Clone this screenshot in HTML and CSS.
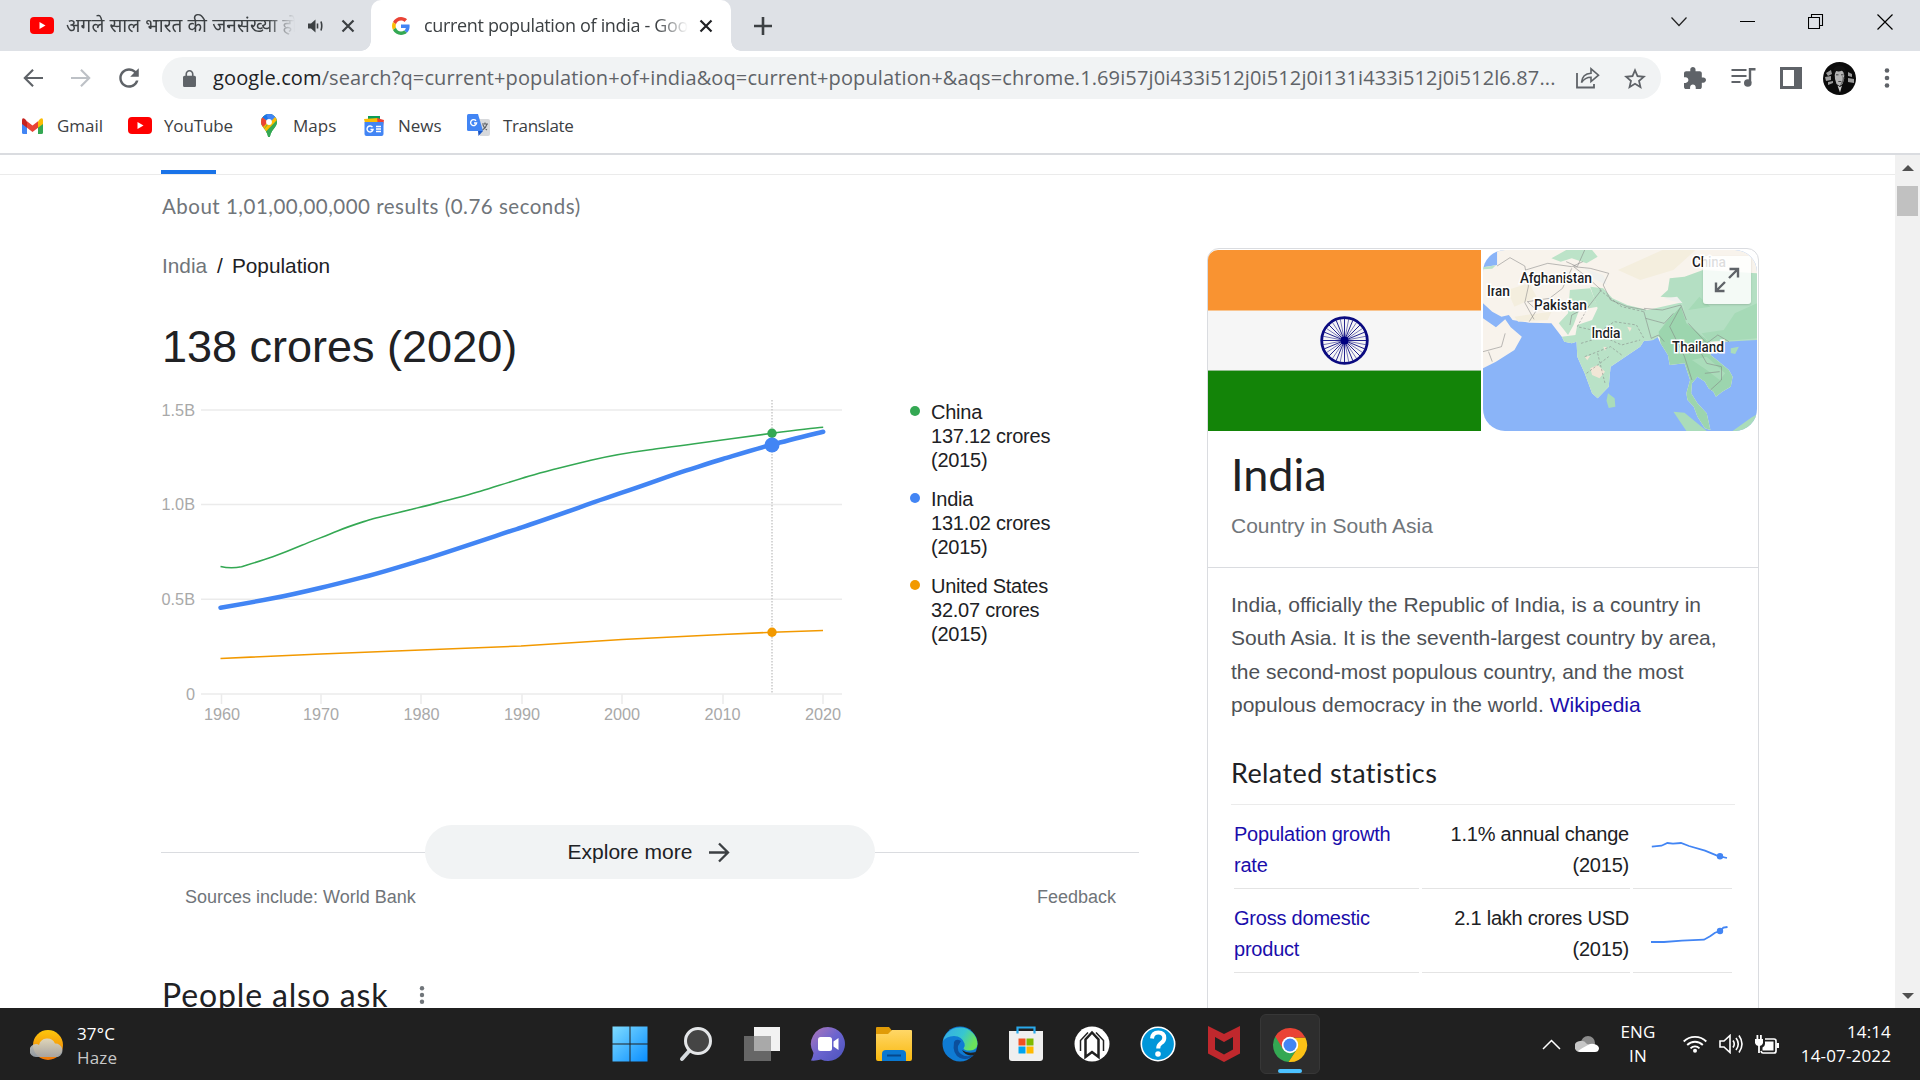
FILE: index.html
```html
<!DOCTYPE html>
<html lang="en">
<head>
<meta charset="utf-8">
<title>current population of india - Google Search</title>
<link rel="stylesheet" href="styles.css">
</head>
<body>
<header class="tabs">
  <div class="tab tab-idle">
    <svg class="yt" viewBox="0 0 24 17"><rect width="24" height="17" rx="4" fill="#f00"/><path d="M9.500 5v7l6-3.500z" fill="#fff"/></svg>
    <span class="tab-title tab-title-hi">अगले साल भारत की जनसंख्या हो</span>
    <svg class="speaker" viewBox="0 0 15 14"><path d="M0 4.500h3L7.500.5v13L3 9.500H0z" fill="#3c4043"/><path d="M9.500 4.500v5M13 2.500q1.500 4.500 0 9" fill="none" stroke="#3c4043" stroke-width="1.600"/></svg>
    <svg class="tab-x" viewBox="0 0 14 14"><path d="M1.500 1.500l11 11M12.500 1.500l-11 11" stroke="#3c4043" stroke-width="2.200"/></svg>
  </div>
  <div class="tab tab-active">
    <svg class="favicon" viewBox="0 0 48 48"><path fill="#EA4335" d="M24 9.500c3.540 0 6.710 1.220 9.210 3.600l6.850-6.850C35.900 2.380 30.470 0 24 0 14.620 0 6.510 5.380 2.560 13.220l7.980 6.190C12.430 13.720 17.740 9.500 24 9.500z"/><path fill="#4285F4" d="M46.980 24.550c0-1.570-.15-3.090-.38-4.550H24v9.020h12.940c-.58 2.960-2.260 5.480-4.780 7.180l7.730 6c4.510-4.180 7.090-10.360 7.090-17.650z"/><path fill="#FBBC05" d="M10.530 28.590c-.48-1.450-.76-2.990-.76-4.590s.27-3.140.76-4.590l-7.980-6.190C.92 16.460 0 20.120 0 24s.92 7.540 2.560 10.780l7.970-6.190z"/><path fill="#34A853" d="M24 48c6.480 0 11.930-2.130 15.890-5.810l-7.730-6c-2.150 1.450-4.920 2.300-8.160 2.300-6.260 0-11.570-4.220-13.470-9.910l-7.980 6.190C6.510 42.620 14.620 48 24 48z"/></svg>
    <span class="tab-title tab-title-en">current population of india - Goo</span>
    <svg class="tab-x" viewBox="0 0 14 14"><path d="M1.500 1.500l11 11M12.500 1.500l-11 11" stroke="#202124" stroke-width="2.200"/></svg>
  </div>
  <svg class="new-tab" viewBox="0 0 18 18"><path d="M9 0v18M0 9h18" stroke="#3c4043" stroke-width="2.600"/></svg>
  <div class="window-controls">
    <svg width="16" height="10" viewBox="0 0 16 10"><path d="M.5.5L8 8.500 15.500.5" fill="none" stroke="#222" stroke-width="1.200"/></svg>
    <svg width="15" height="15" viewBox="0 0 15 15"><path d="M0 7.500h15" stroke="#000"/></svg>
    <svg width="16" height="16" viewBox="0 0 16 16"><path d="M.5 3.500h11v11H.5zM3.500 3.500v-3h11v11h-3" fill="none" stroke="#000" stroke-width="1.100"/></svg>
    <svg width="16" height="16" viewBox="0 0 16 16"><path d="M.5.5l15 15M15.500.5l-15 15" stroke="#000" stroke-width="1.200"/></svg>
  </div>
</header>

<nav class="toolbar">
  <svg class="nav-icon" viewBox="0 0 24 24"><path fill="#5f6368" d="M22 11H6.300l6.500-6.500L11.300 3l-9 9 9 9 1.500-1.500L6.300 13H22z"/></svg>
  <svg class="nav-icon" viewBox="0 0 24 24"><path fill="#bdc1c6" d="M2 11h15.700l-6.500-6.500L12.700 3l9 9-9 9-1.500-1.500 6.500-6.500H2z"/></svg>
  <svg class="nav-icon reload" viewBox="3 3 18 18"><path fill="#5f6368" d="M17.650 6.350C16.200 4.900 14.210 4 12 4c-4.420 0-7.990 3.580-7.990 8s3.570 8 7.990 8c3.730 0 6.840-2.550 7.730-6h-2.080c-.82 2.330-3.040 4-5.650 4-3.310 0-6-2.690-6-6s2.690-6 6-6c1.660 0 3.140.69 4.220 1.780L13 11h7V4l-2.350 2.350z"/></svg>
  <div class="omnibox">
    <svg class="lock" viewBox="4 1 16 21"><path fill="#5f6368" d="M18 8h-1V6c0-2.760-2.240-5-5-5S7 3.240 7 6v2H6c-1.100 0-2 .9-2 2v10c0 1.100.9 2 2 2h12c1.100 0 2-.9 2-2V10c0-1.100-.9-2-2-2zm-3 0H9V6c0-1.660 1.340-3 3-3s3 1.340 3 3v2z"/></svg>
    <span class="url"><b>google.com</b>/search?q=current+population+of+india&amp;oq=current+population+&amp;aqs=chrome.1.69i57j0i433i512j0i512j0i131i433i512j0i512l6.87...</span>
    <svg class="share" viewBox="0 0 24 22"><path d="M1 6v14.500h17V17" fill="none" stroke="#5f6368" stroke-width="1.800"/><path d="M5.500 15.500c.5-6 4-9 9.500-9.300V1.800l7.500 6.400-7.500 6.300v-4.300c-4.500 0-7 1.500-9.500 5.300z" fill="none" stroke="#5f6368" stroke-width="1.600"/></svg>
    <svg class="star" viewBox="2 2 20 19"><path fill="#5f6368" d="M22 9.240l-7.190-.62L12 2 9.190 8.630 2 9.240l5.460 4.730L5.820 21 12 17.270 18.180 21l-1.630-7.030L22 9.240zM12 15.400l-3.760 2.270 1-4.280-3.320-2.880 4.380-.38L12 6.100l1.710 4.040 4.380.38-3.320 2.880 1 4.280L12 15.400z"/></svg>
  </div>
  <svg class="ext" viewBox="2 1 21 21"><path fill="#5f6368" d="M20.500 11H19V7c0-1.100-.9-2-2-2h-4V3.500C13 2.120 11.880 1 10.500 1S8 2.120 8 3.500V5H4c-1.100 0-1.990.9-1.990 2v3.800H3.500c1.490 0 2.700 1.210 2.700 2.700s-1.210 2.700-2.700 2.700H2V20c0 1.100.9 2 2 2h3.800v-1.500c0-1.490 1.210-2.700 2.700-2.700 1.490 0 2.700 1.210 2.700 2.700V22H17c1.100 0 2-.9 2-2v-4h1.500c1.380 0 2.500-1.120 2.500-2.500S21.880 11 20.500 11z"/></svg>
  <svg class="media" viewBox="0 0 24 20"><path d="M0 2h15M0 8h15M0 14h9" stroke="#5f6368" stroke-width="2.200"/><path d="M18.500 15V1.200H24" fill="none" stroke="#5f6368" stroke-width="2.400"/><circle cx="16.300" cy="15" r="3.800" fill="#5f6368"/></svg>
  <svg class="panel" viewBox="0 0 22 22"><path fill="#5f6368" fill-rule="evenodd" d="M0 0h22v22H0zM3 3v16h11V3z"/></svg>
  <svg class="avatar" viewBox="0 0 33 33"><clipPath id="av"><circle cx="16.500" cy="16.500" r="16.500"/></clipPath><g clip-path="url(#av)"><path d="M0 0h33v33H0z" fill="#0b0b0b"/><path d="M3 11l5-3 1 4-4 2zM2 15l6-1v4l-5 1zM25 10l4 2v3l-4-1zM25 16l6 1v4l-6-1zM5 20l5-1v2l-5 2z" fill="#9a9a9a"/><path d="M11.500 10q5-4 10 0l-.5 7-1.500 5-3 2-3-2-1.500-5z" fill="#b5b5b5"/><path d="M10 12q-1-8 7-8.500 6 0 6 8.500l-2 1q0-3-2-4.500-3 1.500-6 .5l-1.500 4z" fill="#111"/><path d="M13 12.800h2.500M18 12.800h2.500M15.300 19.500h3" stroke="#444" stroke-width="1"/><path d="M19 14q2 3-2 9l3-2 1.500-5z" fill="#666"/><path d="M14.500 23.500l2.500 7 2-7-2 1.500z" fill="#ccc"/></g></svg>
  <svg class="menu" viewBox="0 0 6 20"><g fill="#5f6368"><circle cx="3" cy="2.500" r="2.300"/><circle cx="3" cy="10" r="2.300"/><circle cx="3" cy="17.500" r="2.300"/></g></svg>
</nav>

<nav class="bookmarks">
  <a class="bm bm-gmail"><svg width="21" height="16" viewBox="0 0 21 16"><path d="M0 2v12.500Q0 16 1.500 16H5V6z" fill="#4285f4"/><path d="M21 2v12.500q0 1.500-1.500 1.500H16V6z" fill="#34a853"/><path d="M0 2.300V6l5 3.800V3.500L3 1Q0-1 0 2.300z" fill="#c5221f"/><path d="M5 3.300l5.500 4.200L16 3.300v6.500L10.500 14 5 9.800z" fill="#ea4335"/><path d="M21 2.300V6l-5 3.800V3.500L18 1q3-2 3 1.300z" fill="#fbbc04"/></svg><span>Gmail</span></a>
  <a class="bm bm-yt"><svg width="24" height="17" viewBox="0 0 24 17"><rect width="24" height="17" rx="4" fill="#f00"/><path d="M9.500 5v7l6-3.500z" fill="#fff"/></svg><span>YouTube</span></a>
  <a class="bm bm-maps"><svg width="16" height="23" viewBox="0 0 16 23"><clipPath id="pin"><path d="M8 0a8 8 0 0 1 8 8c0 5-6 8-7 14.500q-1 1-2 0C6 16 0 13 0 8a8 8 0 0 1 8-8z"/></clipPath><g clip-path="url(#pin)"><path d="M0 0h16v23H0z" fill="#34a853"/><path d="M0 12L14 0 0-2z" fill="#1a73e8"/><path d="M0 3l8 5-6 8-3-2z" fill="#fbbc04"/><path d="M0 2l7 6-5 5-4-6z" fill="#ea4335"/><path d="M5 0h12v5L9 9z" fill="#4285f4"/><path d="M3 15L14 3l3 3L6 19z" fill="#fbbc04"/><path d="M4.500 18L17 5v18H5z" fill="#34a853"/></g><circle cx="8" cy="8" r="2.900" fill="#fff"/></svg><span>Maps</span></a>
  <a class="bm bm-news"><svg width="22" height="20" viewBox="0 0 22 20"><path d="M5 0h12v6H5z" fill="#0c9d58"/><path d="M1 3l14-1 2 5H2z" fill="#fbbc04"/><path d="M14 2l7 2-1 6h-5z" fill="#ea4335"/><path d="M1.500 6h19v12q0 2-2 2h-15q-2 0-2-2z" fill="#4285f4"/><path d="M9.500 11.200a3 3 0 1 0 .5 2.300H7.500M13 10.500h5M13 13h5M13 15.500h5" fill="none" stroke="#fff" stroke-width="1.400"/></svg><span>News</span></a>
  <a class="bm bm-tr"><svg width="23" height="23" viewBox="0 0 23 23"><path d="M9 5h12q2 0 2 2v13q0 2-2 2h-8z" fill="#d7d9dc"/><path d="M1.500 0H11l5 17H1.500Q0 17 0 15.500v-14Q0 0 1.500 0z" fill="#4285f4"/><path d="M11 17h5l-4.500 5z" fill="#1a56c4"/><path d="M9 6.800a3 3 0 1 0 .6 2.200H7" fill="none" stroke="#fff" stroke-width="1.400"/><path d="M15 10h6M18 8.500V10M20 10q-1 4-4.500 6M16 11q1 3 4 5" fill="none" stroke="#5f6368" stroke-width="1.100"/></svg><span>Translate</span></a>
</nav>

<div class="viewport">
  <main class="page">
    <div class="result-tabs"><i></i></div>
    <p class="stats">About 1,01,00,00,000 results (0.76 seconds)</p>
    <div class="columns">
      <section class="left">
        <div class="crumbs"><span class="muted">India</span><span class="slash">/</span><span>Population</span></div>
        <h1>138 crores (2020)</h1>
        <div class="chart-row">
          <svg class="chart" width="689" height="340" viewBox="161 395 689 340">
            <g stroke="#ebebeb" stroke-width="1.500"><path d="M201 410h641M201 504.500h641M201 599.300h641M201 694h641"/><path d="M221.500 694v10M321 694v10M421 694v10M522 694v10M622 694v10M723 694v10M823 694v10"/></g>
            <path d="M772 400v294" stroke="#c9c9c9" stroke-width="1.500" stroke-dasharray="1.500 1.500"/>
            <g class="axis" text-anchor="end"><text x="195" y="415.700">1.5B</text><text x="195" y="509.700">1.0B</text><text x="195" y="604.700">0.5B</text><text x="195" y="699.700">0</text></g>
            <g class="axis" text-anchor="middle"><text x="222" y="719.500">1960</text><text x="321" y="719.500">1970</text><text x="421.500" y="719.500">1980</text><text x="522" y="719.500">1990</text><text x="622" y="719.500">2000</text><text x="722.500" y="719.500">2010</text><text x="823" y="719.500">2020</text></g>
            <path d="M220.500 566.500Q231 569 241.500 566.700C252 563.500 262 560.500 272.800 556.700S292 549.500 301.800 545.300S325.500 536 337.500 531S358 523.500 368.800 520S403 511.700 420 507.300S462 497 480.400 491.300S511 481.500 529.500 476S572 464.800 592 460S640 451 650 449.700S674 446.300 694.600 443.700S754 435.700 771.900 433.300S812 428 823.200 427.300" fill="none" stroke="#34a853" stroke-width="1.600"/>
            <path d="M220.500 607.700C238 604.700 255 601.700 272.800 598.300S305 591.500 321 587.700S352 580 368.800 575.700S403 565.800 420 560.700S488 538.500 521.900 527.300S600 499.800 621.900 492.700S670 475.700 685.700 470.700S710 462.800 722.800 459S755 449.200 771.900 444.700S812 434.500 823.200 431.700" fill="none" stroke="#4285f4" stroke-width="4.500" stroke-linecap="round"/>
            <path d="M220.500 658.500L321 654 421 650 521 646 622 639.500 722 634.500 772 632.300 823 630.500" fill="none" stroke="#f29900" stroke-width="1.600"/>
            <circle cx="772" cy="433.300" r="4.700" fill="#34a853"/><circle cx="772" cy="445" r="7.500" fill="#4285f4"/><circle cx="772" cy="632.300" r="4.700" fill="#f29900"/>
          </svg>
          <ul class="legend">
            <li class="green">China<br>137.12 crores<br>(2015)</li>
            <li class="blue">India<br>131.02 crores<br>(2015)</li>
            <li class="orange">United States<br>32.07 crores<br>(2015)</li>
          </ul>
        </div>
        <div class="explore"><a class="pill"><span>Explore more</span><svg width="21" height="21" viewBox="0 0 21 21"><path d="M0 10.500h19M10 1.500l9 9-9 9" fill="none" stroke="#3c4043" stroke-width="2.300"/></svg></a></div>
        <div class="sources"><span>Sources include: World Bank</span><span>Feedback</span></div>
        <div class="ask"><span>People also ask</span><svg width="6" height="18" viewBox="0 0 6 18"><g fill="#70757a"><circle cx="3" cy="2.200" r="2.200"/><circle cx="3" cy="9" r="2.200"/><circle cx="3" cy="15.800" r="2.200"/></g></svg></div>
      </section>

      <aside class="card">
        <div class="media-row">
          <svg class="flag" width="273" height="181" viewBox="0 0 273 181">
            <path d="M0 0h273v60H0z" fill="#f99331"/><path d="M0 60h273v61H0z" fill="#f6f6f6"/><path d="M0 121h273v60H0z" fill="#138408"/><path d="M0 60.500h273" stroke="#f9c590"/><path d="M0 120.500h273" stroke="#93bd90"/>
            <g fill="none" stroke="#0b0b80" transform="translate(136.500 90.500)"><circle r="22.800" stroke-width="2.800"/>
              <path id="spokes" stroke-width=".9" d="M0-22V22M-22 0H22M-15.600-15.600L15.600 15.600M15.600-15.600L-15.600 15.600M-8.400-20.300L8.400 20.300M8.400-20.300L-8.400 20.300M-20.300-8.400L20.300 8.400M20.300-8.400L-20.300 8.400"/>
              <use href="#spokes" transform="rotate(11.250)" opacity=".55"/></g>
            <circle cx="136.500" cy="90.500" r="4" fill="#00007f"/>
          </svg>
          <div class="map">
            <svg class="terrain" width="274" height="181" viewBox="765 30 741 543" preserveAspectRatio="none">
              <path d="M765 30h741v543H765z" fill="#8ab4f8"/>
              <path d="M803 30H1506V300H1450L1420 305 1390 320 1380 345 1400 362 1430 390 1440 410 1435 440 1412 455 1395 470 1388 455 1375 445 1365 425 1345 410 1330 430 1328 460 1345 490 1370 520 1380 570 1365 565 1345 530 1335 500 1318 480 1315 460 1325 420 1310 370 1270 375 1265 345 1245 310 1235 285 1225 300 1200 303 1190 320 1150 350 1110 380 1105 440 1075 475 1060 460 1040 400 1020 350 1018 305 1005 310 985 305 978 290 950 250 890 248 845 240 835 225 815 230 790 215 765 190V82L803 75Z" fill="#f8f3ec"/>
              <path d="M765 235L800 262 825 238 840 262 870 290 850 330 800 365 765 385Z" fill="#f8f3ec"/>
              <path d="M1130 90l60 30 90-30 60-60h-90zM830 150l60-20 20 40-60 30zM850 230l100-15-10 25-80 5z" fill="#f4eede"/>
              <path d="M765 82l35-6-10 10-25 2zM950 55l40-25h70l15 20-30 20-40-15-30 10zM1000 150l55-5 20 55-50 10-15 45-15 30-25-35 25-30z" fill="#bce3c8"/>
              <path d="M1055 140L1090 145 1115 175 1155 195 1210 210 1270 195 1310 185 1325 205 1285 295 1270 280 1260 305 1240 290 1225 300 1200 303 1190 320 1150 350 1110 380 1105 440 1075 475 1060 460 1040 400 1020 350 1018 305 1005 310 985 305 978 290 1015 285 1020 255 1060 240 1075 205Z" fill="#b9e2c7"/>
              <path d="M1506 100L1360 90 1310 110 1270 115 1265 150 1245 170 1290 175 1310 200 1300 280 1380 300 1420 305 1506 300Z" fill="#b4dfc3"/>
              <path d="M1506 190l-60 30-30 50-60 10 20 25 75-5 55-5zM1320 210l60-10-30-30z" fill="#a6dab7"/>
              <path d="M1300 200L1315 250 1360 290 1390 315 1380 345 1400 362 1430 390 1440 410 1435 440 1412 455 1395 470 1388 455 1375 445 1365 425 1345 410 1330 430 1328 460 1345 490 1370 520 1380 570 1365 565 1345 530 1335 500 1318 480 1315 460 1325 420 1310 370 1270 375 1265 345 1245 310 1240 275 1265 240Z" fill="#9cd5ae"/>
              <path d="M1280 515l30 3 60 55h-55zM1440 573l50-40 16-10v50zM1435 325l22-5-10 22-12-3zM1103 460l18 15 2 25-18 4-6-22zM1330 360l40-10 50 50-15 20-35-30z" fill="#aadcba"/>
              <path d="M1055 385l20-10 20 20-15 20-20-10zM1155 260l12 3-5 12zM1040 350l15-3-8 14zM1090 320l10 2-5 10z" fill="#f1e6d6"/>
              <path d="M1255 175l35-5 15 20-30-8zM1040 85l50 20 10 30-30-15z" fill="#f0f1ee"/>
              <g fill="none" stroke="#808080" stroke-width="1.500"><path d="M803 78l35-25 40 25 10 60-10 50 25 50M880 90l60-20 65 10 30-15M885 185l60-10 35-30 25-60M890 245l20-35-25-25M1010 80l45 5 50 15-15 35 20 45 45 20 50 10M1010 80l35 30 40 40-35 50-45 25-5 30M1200 205l50 5 50-15 15 45M1200 215l20 80 20-10 15 20M1205 235l50 15 25-30M1300 200l-30 60 40 90 20 70M1320 250l50 60 30-25 30 20M1380 310l-30 20 20 40 40 10v40l-30 30M1365 400l40-5M765 335l50-15 10-40M780 335l10 30M1040 30l-20 50-30-15"/><path d="M1080 150l60 50 60 15M1050 200l-30 60 60 15 40-30 60 10 20 40M1030 310l60-20 50 25 50-15M1040 350l70-30 30 25M1045 400l60-50M1075 340l20 90" stroke-dasharray="7 5"/></g>
            </svg>
            <svg class="labels" width="274" height="181" viewBox="0 0 274 181"><text x="37" y="32.500" textLength="72">Afghanistan</text><text x="4" y="46" textLength="23">Iran</text><text x="51" y="59.500" textLength="53">Pakistan</text><text x="108.500" y="87.500" textLength="29">India</text><text x="189" y="101.500" textLength="52">Thailand</text><text x="209" y="16.500" textLength="34">China</text></svg>
            <span class="expand"><svg width="26" height="26" viewBox="0 0 26 26"><path d="M15.500 2H24v8.500M24 2l-9 9M2 15.500V24h8.500M2 24l9-9" fill="none" stroke="#5f6368" stroke-width="2.400"/></svg></span>
          </div>
        </div>
        <div class="card-head"><h2>India</h2><p>Country in South Asia</p></div>
        <p class="desc">India, officially the Republic of India, is a country in<br>South Asia. It is the seventh-largest country by area,<br>the second-most populous country, and the most<br>populous democracy in the world. <a>Wikipedia</a></p>
        <h3>Related statistics</h3>
        <div class="table">
          <div class="row"><a>Population growth<br>rate</a><div class="val">1.1% annual change<br>(2015)</div><div class="spark"><svg width="100" height="84" viewBox="1633 805 100 84"><path d="M1651.800 846.700L1661.500 845.700 1667.400 843 1673 843.700 1681 843 1689 846 1705 850.700 1716.500 855.300 1720 856.300 1727 858" fill="none" stroke="#4285f4" stroke-width="1.800"/><circle cx="1720" cy="856.300" r="3.200" fill="#4285f4"/></svg></div></div>
          <div class="row"><a>Gross domestic<br>product</a><div class="val">2.1 lakh crores USD<br>(2015)</div><div class="spark"><svg width="100" height="84" viewBox="1633 889 100 84"><path d="M1651 942H1664L1682 940.700 1704 939.700 1710.500 936 1715 932.700 1720 931 1723.400 927.700 1727.500 927" fill="none" stroke="#4285f4" stroke-width="1.800"/><circle cx="1720" cy="931" r="3.200" fill="#4285f4"/></svg></div></div>
        </div>
      </aside>
    </div>
  </main>
  <div class="scrollbar">
    <svg width="12" height="6" viewBox="0 0 12 6"><path d="M0 6l6-6 6 6z" fill="#505050"/></svg>
    <i class="thumb"></i>
    <svg class="down" width="12" height="6" viewBox="0 0 12 6"><path d="M0 0l6 6 6-6z" fill="#505050"/></svg>
  </div>
</div>

<footer class="taskbar">
  <div class="weather">
    <svg width="35" height="32" viewBox="0 0 35 32"><defs><linearGradient id="sun" x2="0" y2="1"><stop stop-color="#fdc70c"/><stop offset="1" stop-color="#f0780a"/></linearGradient><linearGradient id="cl" x2="0" y2="1"><stop stop-color="#dcd9cc"/><stop offset="1" stop-color="#9fa7b0"/></linearGradient></defs><circle cx="18" cy="15" r="15" fill="url(#sun)"/><path d="M6 27a6.500 6.500 0 0 1 0-13q2 0 3 1a8.500 8.500 0 0 1 16-1.500 7 7 0 0 1 3 13.500z" fill="url(#cl)" opacity=".9"/></svg>
    <div class="sys">37°C<br><em>Haze</em></div>
  </div>
  <div class="apps">
    <svg viewBox="0 0 36 36"><defs><linearGradient id="win" x2="1" y2="1"><stop stop-color="#7fdcff"/><stop offset="1" stop-color="#0a8eff"/></linearGradient></defs><path fill="url(#win)" d="M.5.5h17v17H.5zM18.500.5h17v17h-17zM.5 18.500h17v17H.5zM18.500 18.500h17v17h-17z"/></svg>
    <svg viewBox="0 0 36 36"><path d="M12 24L4 33" stroke="#d5dade" stroke-width="4" stroke-linecap="round"/><circle cx="20" cy="15" r="12.500" fill="#454545" stroke="#e4e6e8" stroke-width="3"/></svg>
    <svg viewBox="0 0 36 36"><path d="M10 1h26v24H10z" fill="#f2f2f2"/><path d="M0 10h27v25H0z" fill="#666"/><path d="M10 10h17v15H10z" fill="#a9a9a9"/></svg>
    <svg viewBox="0 0 36 36"><defs><linearGradient id="chat" x2="1" y2="1"><stop stop-color="#b077b8"/><stop offset=".5" stop-color="#6a64cf"/><stop offset="1" stop-color="#4b53bc"/></linearGradient></defs><path d="M18 1a17 17 0 1 1-7 32.500Q6 35 1 34.500 3 31 3.500 27A17 17 0 0 1 18 1z" fill="url(#chat)"/><rect x="8" y="11" width="14" height="14" rx="2.500" fill="#fff"/><path d="M23.500 15.500l5-3.500v12l-5-3.500z" fill="#fff"/></svg>
    <svg viewBox="0 0 36 36"><defs><linearGradient id="fold" x2="0" y2="1"><stop stop-color="#ffd767"/><stop offset="1" stop-color="#f9b90f"/></linearGradient></defs><path d="M0 2q0-1 1-1h12l4 5v5H0z" fill="#e09b07"/><path d="M0 8h12l4-4h19q1 0 1 1v28q0 2-2 2H2q-2 0-2-2z" fill="url(#fold)"/><path d="M6 35V28q0-4 4-4h16q4 0 4 4v7z" fill="#0a78d1"/><path d="M11 29.500h14" stroke="#06488c" stroke-width="2"/></svg>
    <svg viewBox="0 0 36 36"><defs><linearGradient id="edg" x2="1" y2=".4"><stop stop-color="#35a9e8"/><stop offset=".6" stop-color="#37c6d0"/><stop offset="1" stop-color="#6be35c"/></linearGradient></defs><circle cx="18" cy="18" r="17.500" fill="#0f7bd4"/><path d="M1 15A17.500 17.500 0 0 1 35.500 18q-.5 6-7.500 6.500-5 .3-6.500-2 2-2 1-5Q20 10 12 10 4 10.500 1 15z" fill="url(#edg)"/><path d="M12 16q-2 12 6 16 8 3 14-3-8 3-13-1-4-3-3-8l3-5q-5-3-7 1z" fill="#0c4f9c"/><path d="M20 24q5 4 14 2l-2 3q-8 2-12-5z" fill="#202020"/></svg>
    <svg viewBox="0 0 36 36"><path d="M1 5h34v27q0 3-3 3H4q-3 0-3-3z" fill="#efefef"/><path d="M9.500 7.500v-6h17v6" fill="none" stroke="#29a8ea" stroke-width="2.200"/><path fill="#f25022" d="M10.500 12.500h7v7h-7z"/><path fill="#7fba00" d="M18.500 12.500h7v7h-7z"/><path fill="#00a4ef" d="M10.500 20.500h7v7h-7z"/><path fill="#ffb900" d="M18.500 20.500h7v7h-7z"/></svg>
    <svg viewBox="0 0 36 36"><circle cx="18" cy="18" r="17.500" fill="#fff"/><path d="M6.500 25V14.500l7.500-8M29.500 25V14.500l-7.500-8" fill="none" stroke="#202020" stroke-width="1.500"/><path d="M11.500 31V13.500L18 6.500l6.500 7V31L18 26z" fill="#fff" stroke="#202020" stroke-width="2.500"/></svg>
    <svg viewBox="0 0 36 36"><circle cx="18" cy="18" r="16.700" fill="#0096d9" stroke="#fff" stroke-width="1.600"/><path d="M12 12.500q.5-6 6.300-6 6 0 6 5.500 0 3-3.300 5.200-2.800 2-2.800 5.300" fill="none" stroke="#fff" stroke-width="4"/><circle cx="18" cy="28" r="2.800" fill="#fff"/></svg>
    <svg viewBox="0 0 36 36"><path d="M2 0l16 8L34 0v27.500L18 36 2 27.500zM9 11v12.500l9 5 9-5V11l-9 5z" fill="#c0282d" fill-rule="evenodd"/></svg>
    <div class="app-active"><svg viewBox="0 0 36 36"><path d="M18 18L3.300 9.500A17 17 0 0 0 16.500 35L25 22z" fill="#34a853"/><path d="M18 10.500h15.300A17 17 0 0 1 16.500 35L25 22z" fill="#fbc116"/><path d="M3.300 9.500A17 17 0 0 1 33.300 10.500H18L11 22z" fill="#ea4335"/><circle cx="18" cy="18" r="8.200" fill="#fff"/><circle cx="18" cy="18" r="6.500" fill="#4285f4"/></svg><i></i></div>
  </div>
  <div class="tray">
    <svg width="19" height="11" viewBox="0 0 19 11"><path d="M1 10l8.500-8.500L18 10" fill="none" stroke="#fff" stroke-width="1.500"/></svg>
    <svg class="cloud" width="24" height="16" viewBox="0 0 24 16"><circle cx="13" cy="7" r="7" fill="#8c8c8c"/><path d="M5 16a5 5 0 0 1 0-11q4-1 7 3l8 2-4 6z" fill="#c6c6c6"/><path d="M3 15q4-3 10-6 3-2 6-1 5 1 5 4.500-.5 3.500-4 3.500H5z" fill="#fff"/></svg>
    <div class="sys lang">ENG<br>IN</div>
    <svg class="wifi" width="24" height="18" viewBox="0 0 24 18"><g fill="none" stroke="#fff" stroke-width="1.800"><path d="M.7 6.500a16 16 0 0 1 22.600 0M4.200 10a11 11 0 0 1 15.600 0M7.500 13.300a6.400 6.400 0 0 1 9 0"/></g><circle cx="12" cy="15.700" r="2" fill="#fff"/></svg>
    <svg class="vol" width="24" height="20" viewBox="0 0 24 20"><g fill="none" stroke="#fff" stroke-width="1.600"><path d="M1 7h4l6-5.500v17L5 13H1z"/><path d="M14 6.500q2.500 3.500 0 7M17 4q4.500 6 0 12M20 1.500q6 8.500 0 17"/></g></svg>
    <svg class="bat" width="24" height="19" viewBox="0 0 24 19"><path d="M4 6v12" stroke="#fff" stroke-width="1.800"/><path d="M0 4h8v4q-1 3-4 3T0 8zM1.500 0h1.800v4H1.500zM5 0h1.800v4H5z" fill="#fff"/><path d="M10 4h9q2 0 2 2v10q0 2-2 2H8q-1.500 0-2-2" fill="none" stroke="#fff" stroke-width="1.700"/><path d="M10 6.500h8.500v9H7.500v-3Q10 11 10 9zM21.500 8H24v5h-2.500z" fill="#fff"/></svg>
    <div class="sys clock">14:14<br>14-07-2022</div>
  </div>
</footer>
</body>
</html>
```
FILE: styles.css
```css
* { box-sizing: border-box; margin: 0; padding: 0; }
body { width: 1920px; height: 1080px; overflow: hidden; display: flex; flex-direction: column; background: #fff; color: #202124; font-family: "Liberation Sans", Arial, sans-serif; font-size: 20px; }
svg { display: block; flex: none; }
ul { list-style: none; }

.tabs { flex: none; height: 51px; background: #dee1e6; display: flex; font: 18px/51px "Open Sans", "Noto Sans", sans-serif; color: #3c4043; }
.tab { display: flex; align-items: center; height: 51px; }
.tab-idle { width: 371px; padding-left: 30px; }
.yt { width: 24px; height: 17px; }
.tab-title { overflow: hidden; white-space: nowrap; }
.tab-title-hi { width: 229px; margin-left: 12px; font-size: 19px; letter-spacing: .1px; -webkit-mask-image: linear-gradient(90deg, #000 88%, transparent); mask-image: linear-gradient(90deg, #000 88%, transparent); }
.speaker { width: 15px; height: 14px; margin-left: 13px; }
.tab-x { width: 14px; height: 14px; margin-left: 18px; }
.tab-active { position: relative; width: 360px; padding-left: 21px; background: #fff; border-radius: 10px 10px 0 0; }
.tab-active::before, .tab-active::after { content: ""; position: absolute; bottom: 0; width: 10px; height: 10px; }
.tab-active::before { left: -10px; background: radial-gradient(circle at 0 0, transparent 9.5px, #fff 10px); }
.tab-active::after { right: -10px; background: radial-gradient(circle at 100% 0, transparent 9.5px, #fff 10px); }
.favicon { width: 18px; height: 18px; }
.tab-title-en { width: 264px; margin-left: 14px; letter-spacing: -.34px; -webkit-mask-image: linear-gradient(90deg, #000 88%, transparent); mask-image: linear-gradient(90deg, #000 88%, transparent); }
.tab-title-en + .tab-x { margin-left: 11px; }
.new-tab { width: 18px; height: 18px; margin: 17px 0 0 23px; }
.window-controls { margin-left: auto; padding: 0 27px 8px 0; display: flex; align-items: center; gap: 53px; }

.toolbar { flex: none; height: 54px; padding: 0 30px 0 21px; display: flex; align-items: center; }
.nav-icon { width: 24px; height: 24px; margin-right: 24px; }
.nav-icon.reload { width: 22px; height: 22px; margin: 0 22px 0 1px; }
.omnibox { width: 1500px; height: 42px; border-radius: 21px; background: #f1f3f4; display: flex; align-items: center; padding-left: 21px; }
.lock { width: 13px; height: 17px; }
.url { width: 1350px; margin-left: 17px; font: 20px/40px "Open Sans", sans-serif; letter-spacing: .12px; color: #5f6368; white-space: nowrap; }
.url b { font-weight: 400; color: #202124; }
.share { width: 24px; height: 22px; margin-left: 13px; }
.star { width: 22px; height: 21px; margin-left: 24px; }
.ext { width: 22px; height: 22px; margin-left: 23px; }
.media { width: 25px; height: 20px; margin-left: 25px; }
.panel { width: 22px; height: 22px; margin-left: 24px; }
.avatar { width: 33px; height: 33px; margin-left: 21px; }
.menu { width: 6px; height: 20px; margin-left: 28px; }

.bookmarks { flex: none; height: 50px; border-bottom: 2px solid #dadce0; padding: 0 0 7px 22px; display: flex; align-items: center; font: 17px/22px "Open Sans", sans-serif; color: #3c4043; }
.bm { display: flex; align-items: center; white-space: nowrap; }
.bm-gmail { width: 106px; gap: 14px; }
.bm-yt { width: 133px; gap: 12px; letter-spacing: -.13px; }
.bm-maps { width: 102px; gap: 16px; }
.bm-news { width: 104px; gap: 13px; }
.bm-tr { gap: 13px; letter-spacing: -.35px; }

.viewport { flex: 1; min-height: 0; display: flex; overflow: hidden; }
.page { width: 1895px; overflow: hidden; }
.result-tabs { height: 20px; border-bottom: 1px solid #ebebeb; padding: 15px 0 0 161px; }
.result-tabs i { display: block; width: 55px; height: 4px; background: #1a73e8; }
.stats { padding: 15px 0 1px 162px; font: 20.5px/32px Lato, sans-serif; letter-spacing: .5px; color: #70757a; white-space: nowrap; }
.columns { display: flex; padding-left: 161px; }
.left { width: 978px; padding-top: 26px; }
.crumbs { height: 33px; line-height: 33px; display: flex; font-size: 20.8px; padding-left: 1px; }
.muted { color: #70757a; }
.slash { margin: 0 9px 0 10px; }
h1 { font-size: 45px; line-height: 58px; font-weight: 400; margin-top: 36px; padding-left: 1px; }
.chart-row { display: flex; margin-top: 19px; height: 340px; }
.axis { font: 16.25px "Liberation Sans", sans-serif; fill: #a9a9a9; }
.legend { padding: 5px 0 0 65px; line-height: 24px; letter-spacing: -.24px; }
.legend li { position: relative; padding-left: 16px; height: 87px; white-space: nowrap; }
.legend li::before { content: ""; position: absolute; left: -5px; top: 6px; width: 10px; height: 10px; border-radius: 50%; background: #34a853; }
.legend .blue::before { background: #4285f4; }
.legend .orange::before { background: #f29900; }
.explore { display: flex; align-items: center; margin-top: 90px; }
.explore::before, .explore::after { content: ""; flex: 1; height: 1px; background: #dadce0; }
.pill { width: 450px; height: 54px; border-radius: 27px; background: #f1f3f4; display: flex; align-items: center; justify-content: center; gap: 17px; font-size: 21px; padding-right: 2px; }
.sources { display: flex; justify-content: space-between; padding: 0 23px 0 24px; font-size: 18px; line-height: 24px; margin-top: 6px; color: #70757a; }
.ask { display: flex; align-items: center; font: 32px/40px Lato, sans-serif; letter-spacing: .85px; margin-top: 66px; padding-left: 1px; gap: 31px; white-space: nowrap; }

.card { width: 552px; height: 900px; margin: 25px 0 0 68px; border: 1px solid #dadce0; border-radius: 12px; }
.media-row { display: flex; gap: 2px; padding-top: 1px; }
.flag { border-top-left-radius: 10px; }
.map { position: relative; width: 274px; height: 181px; border-radius: 22px; overflow: hidden; }
.labels { position: absolute; left: 0; top: 0; font: 500 13.8px Roboto, sans-serif; fill: #202124; stroke: #fff; stroke-width: 3px; paint-order: stroke; }
.expand { position: absolute; right: 6px; top: 6px; width: 48px; height: 48px; background: rgba(255, 255, 255, .85); border-radius: 3px; display: flex; align-items: center; justify-content: center; box-shadow: 0 1px 2px rgba(0, 0, 0, .15); }
.card-head { height: 137px; padding: 17px 0 0 23px; border-bottom: 1px solid #dadce0; color: #70757a; }
h2 { font: 400 45px/52px Lato, sans-serif; color: #202124; }
.card-head p { line-height: 26px; margin-top: 13px; font-size: 21px; }
.desc { padding: 20px 0 0 23px; line-height: 33.33px; color: #4d5156; font-size: 21px; white-space: nowrap; }
.card a { color: #1a0dab; }
h3 { font: 400 27px/36px Lato, sans-serif; letter-spacing: .4px; padding: 34px 0 0 23px; white-space: nowrap; }
.table { margin: 13px 23px 0 23px; border-top: 1px solid #ebebeb; padding: 0 3px; line-height: 31px; letter-spacing: -.22px; white-space: nowrap; }
.row { display: grid; grid-template-columns: 185px 208px 99px; gap: 3px; height: 84px; }
.row > * { border-bottom: 1px solid #e4e4e4; padding-top: 14px; }
.row .val { text-align: right; padding-right: 1px; }
.row .spark { padding: 0; overflow: hidden; }

.scrollbar { width: 25px; background: #f1f1f1; display: flex; flex-direction: column; align-items: center; padding: 10px 0 9px; }
.thumb { width: 21px; height: 30px; background: #c1c1c1; margin-top: 15px; }
.down { margin-top: auto; }

.taskbar { flex: none; height: 72px; background: #202020; color: #fff; display: flex; }
.sys { font: 17px/24px "Open Sans", sans-serif; letter-spacing: .15px; white-space: nowrap; }
.sys em { font-style: normal; color: #c8c8c8; }
.weather { width: 597px; padding: 14px 0 0 30px; display: flex; gap: 12px; }
.weather svg { margin-top: 8px; }
.apps { width: 726px; display: flex; align-items: center; padding-left: 15px; gap: 30px; }
.apps svg { width: 36px; height: 36px; }
.app-active { width: 60px; height: 60px; margin-left: -12px; border-radius: 6px; background: #2d2d2d; border: 1px solid #373737; display: flex; flex-direction: column; align-items: center; padding-top: 12px; }
.app-active i { width: 24px; height: 4px; border-radius: 2px; background: #4cc2ff; margin-top: 6px; }
.tray { margin-left: auto; padding-right: 29px; display: flex; align-items: center; }
.cloud { margin-left: 14px; }
.lang { text-align: center; width: 36px; margin: 0 27px 0 21px; }
.vol { margin-left: 12px; }
.bat { margin-left: 12px; }
.clock { text-align: right; width: 112px; }
```
